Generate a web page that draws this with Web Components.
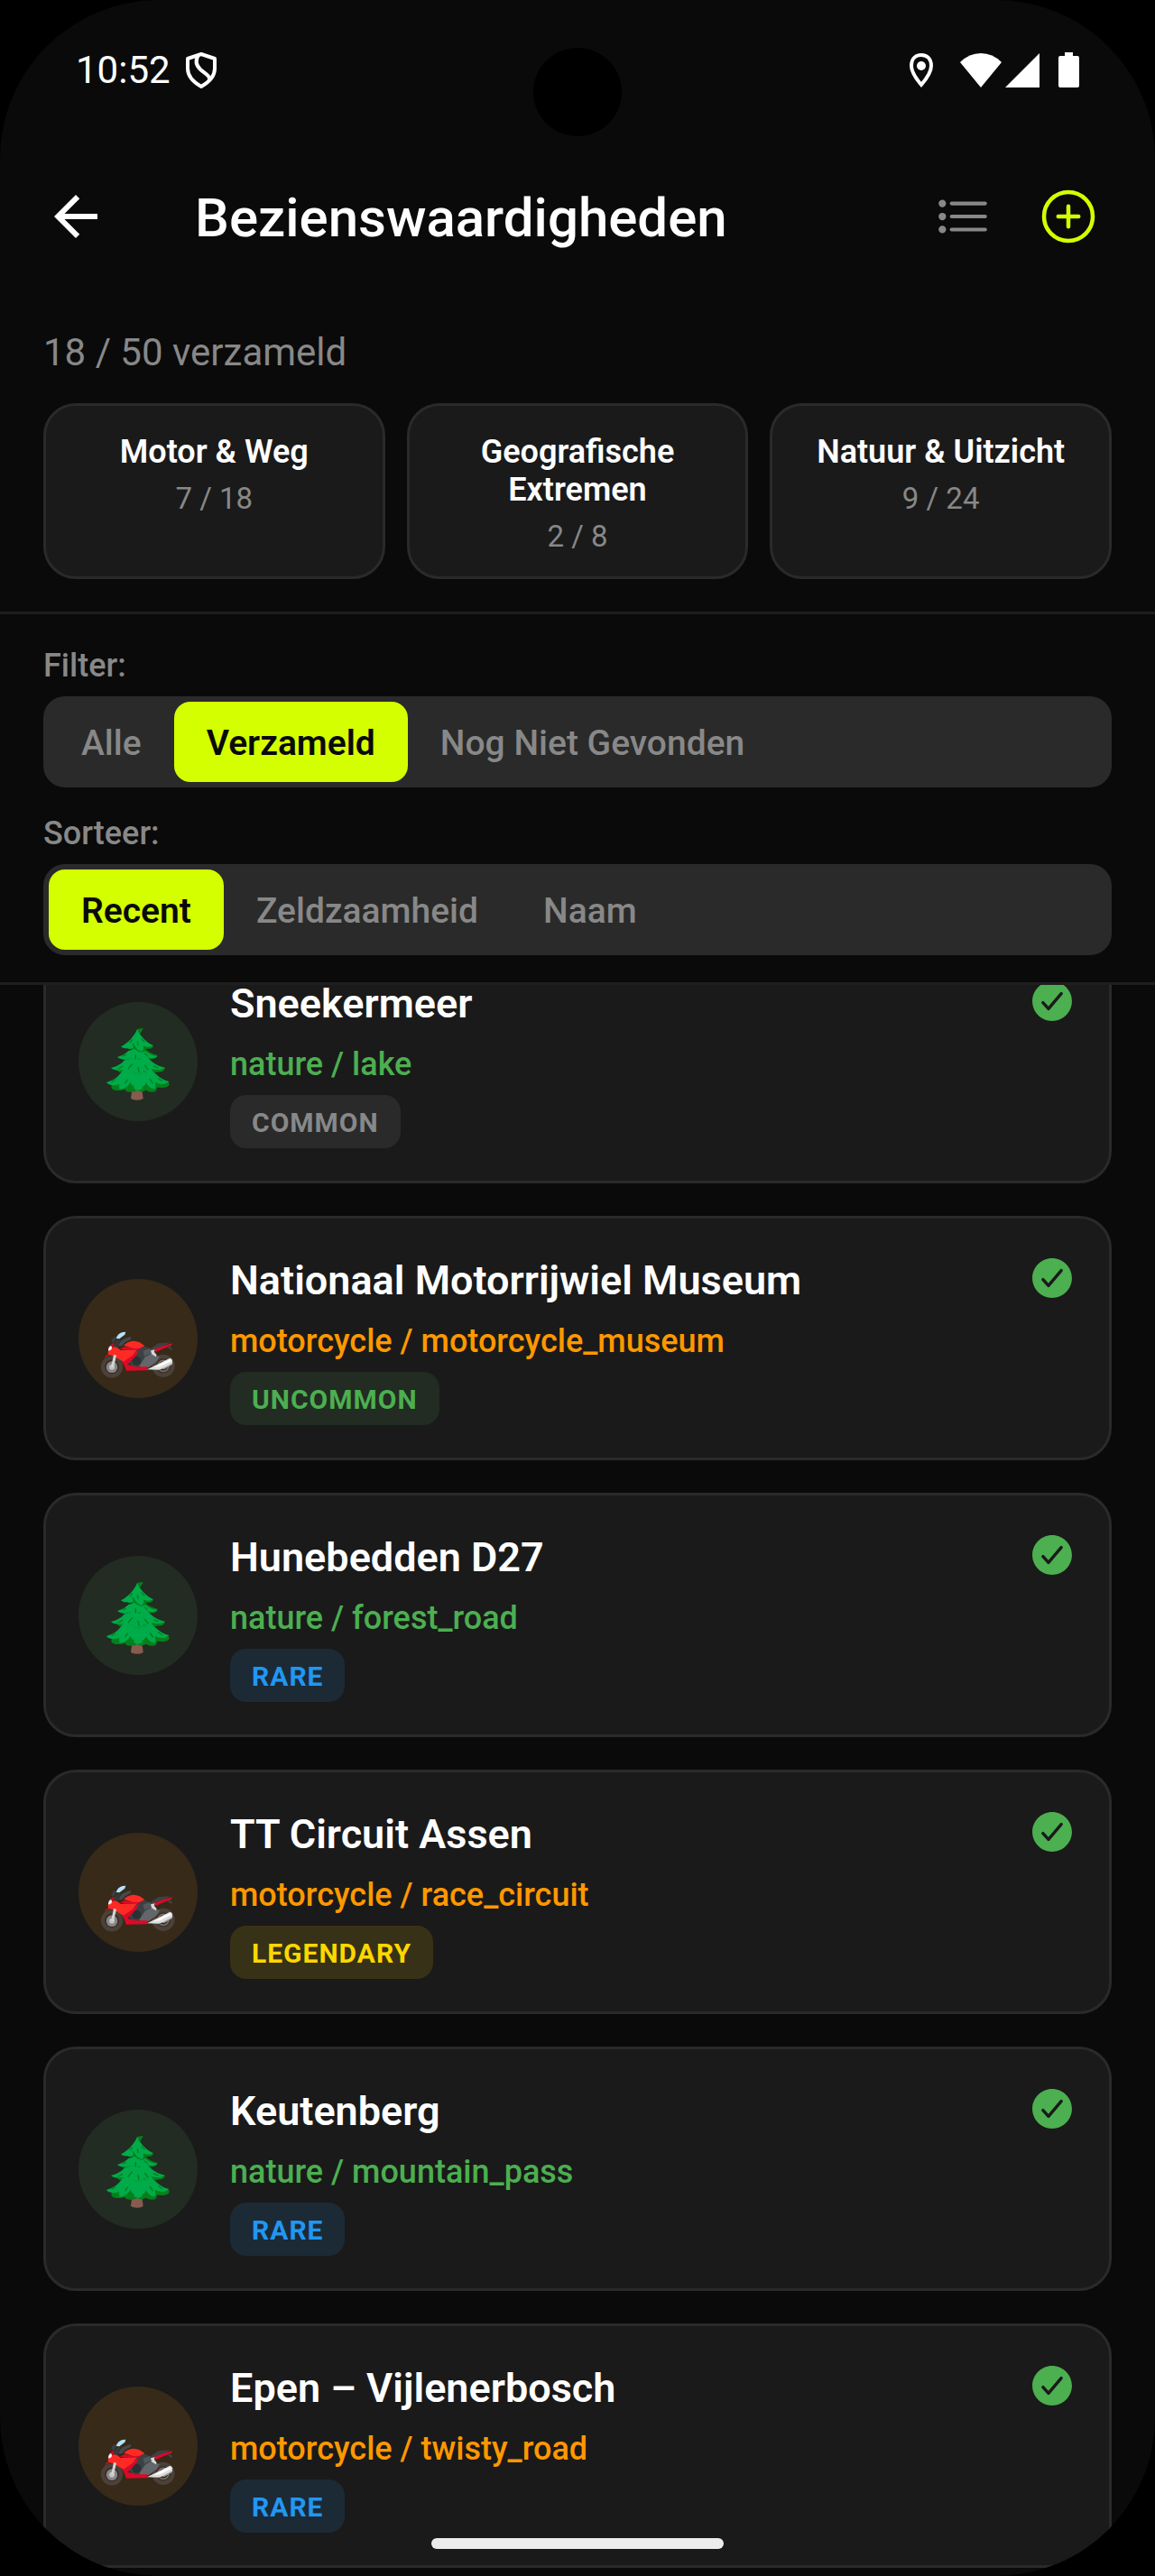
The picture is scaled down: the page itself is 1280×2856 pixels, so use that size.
<!DOCTYPE html>
<html lang="nl">
<head>
<meta charset="UTF-8">
<meta name="viewport" content="width=device-width, initial-scale=1">
<title>Bezienswaardigheden</title>
<style>
    html, body {
        height: 100%;
    }
    body {
        margin: 0;
        background-color: #000;
        color: #fff;
        font-family: Roboto, "Noto Sans", sans-serif;
    }
</style>
</head>
<body>

<phone-screen>
    <status-bar slot="status" time="10:52"></status-bar>
    <app-header slot="header">Bezienswaardigheden</app-header>

    <collection-summary slot="header" total="18 / 50 verzameld">
        <category-card count="7 / 18">Motor &amp; Weg</category-card>
        <category-card count="2 / 8">Geografische Extremen</category-card>
        <category-card count="9 / 24">Natuur &amp; Uitzicht</category-card>
    </collection-summary>

    <filter-panel slot="header">
        <segment-control label="Filter:" options="Alle,Verzameld,Nog Niet Gevonden" selected="Verzameld"></segment-control>
        <segment-control label="Sorteer:" options="Recent,Zeldzaamheid,Naam" selected="Recent"></segment-control>
    </filter-panel>

    <poi-list>
        <poi-card kind="nature" sub="lake" rarity="common">Sneekermeer</poi-card>
        <poi-card kind="motorcycle" sub="motorcycle_museum" rarity="uncommon">Nationaal Motorrijwiel Museum</poi-card>
        <poi-card kind="nature" sub="forest_road" rarity="rare">Hunebedden D27</poi-card>
        <poi-card kind="motorcycle" sub="race_circuit" rarity="legendary">TT Circuit Assen</poi-card>
        <poi-card kind="nature" sub="mountain_pass" rarity="rare">Keutenberg</poi-card>
        <poi-card kind="motorcycle" sub="twisty_road" rarity="rare">Epen – Vijlenerbosch</poi-card>
    </poi-list>
</phone-screen>

<script>
const treeIcon = `
    <svg viewBox="0 0 396 396" aria-hidden="true">
        <path fill="#875b50" d="M179 286h31l5 33q-1 7-20 7t-21-7z"/>
        <path fill="#04801b" d="M195 90c9 20 28 44 53 55q2 7-9 10l-16 1c9 10 23 17 39 20q2 9-12 13l-15 1c12 14 31 24 52 28q2 9-13 14l-21 2c14 15 30 26 49 36q2 14-22 15l-20-1q2 17-18 15-12-1-17-6l-9 4-12 1-9-4q-9 7-20 5-19 1-20-9-18 6-33 3-13-3-13-12l2-8c24-9 44-23 56-38-20 5-35 0-39-10l1-6c20-5 36-14 46-27-15 4-29-2-29-9l2-6c17-4 28-10 37-22-12 4-24 1-24-6l1-6c24-12 42-31 53-57z"/>
        <path fill="#00ab49" d="M195 90c9 20 28 44 53 54-9 6-24 7-34 1 4 8 3 14-3 19-11-1-19-8-24-19-6 9-16 14-22 9-7 1-17 1-24-6 24-12 43-32 54-58z"/>
        <path fill="#00ab49" d="M166 162c9-2 15-4 20-9 7 9 15 14 26 14l10-4c9 9 22 15 40 17-9 7-21 8-33 4-4 11-17 12-27 3-7 10-22 11-30-1-12 8-31 6-43-3 17-5 29-12 37-21z"/>
        <path fill="#00ab49" d="M153 193c10-1 18-3 23-9 13 9 24 11 38 1l15-2c14 17 32 30 58 35-13 9-31 8-44 4l9 18c-12 2-25-2-34-13-9 15-27 18-37 3-10 11-30 15-42 9l9-14c-16 4-31 2-40-6 21-5 37-15 45-26z"/>
        <path fill="#00ab49" d="M140 237c17 3 28-1 38-9 13 16 24 17 38 3 16 7 25 7 34 3 13 14 30 25 52 31-15 10-33 10-47 1l1 21c-14 4-26-8-32-20-2 10-7 14-12 13 2 10-5 13-14 13-10 0-15-5-14-14-7-2-9-7-11-13-9 14-20 23-37 24l-1-18c-14 7-31 6-43-5 21-5 37-17 48-30z"/>
        <g fill="none" stroke="#04801b" stroke-width="4" stroke-linecap="round">
            <path d="M178 126l-6 8M196 131l2 12M210 123l9 9M181 139l6 17M157 175l-10 4M190 176v12M220 171l8 7M146 214l-14 8M178 207l-13 15M198 217l3 16M221 211l10 14M250 213l14 5M122 257l-11 8M163 258l-8 12M238 257l9 13M266 254l11 8"/>
        </g>
    </svg>`;

const motorIcon = `
    <svg viewBox="-39 -141 396 396" aria-hidden="true">
        <circle cx="72" cy="151" r="30" fill="#37291a" stroke="#4b413b" stroke-width="13"/>
        <circle cx="243" cy="148" r="31" fill="#37291a" stroke="#4b413b" stroke-width="14"/>
        <circle cx="243" cy="148" r="18" fill="none" stroke="#77716c" stroke-width="5"/>
        <circle cx="72" cy="152" r="19" fill="#868686"/>
        <circle cx="72" cy="152" r="9" fill="#c4c4c4"/>
        <path fill="#3c4145" d="M138 100l38-18 24 9 26-18 40-3-28 16-28 15 8 12-26 34-50 6-24-28z"/>
        <circle cx="154" cy="131" r="15" fill="#2b3033"/>
        <path fill="#53585c" d="M176 98l22-8 6 14-24 12z"/>
        <path fill="#63676b" d="M164 147l18-28 24-14 9 8 16 4-10 16-26 20-28 2z"/>
        <path fill="#dc0928" d="M48 122q4-12 17-13l22 2 58-6 17-10q-6 18-24 34l-14 14 26 8h40v12l-70 1q-7-20-15-32l-20-20q-18-6-37 10z"/>
        <path fill="#fd2b24" d="M59 101l8-16 14-5 20 16 55-3-16 21-30 20-30-18-20-6z"/>
        <path fill="#dc0928" d="M98 92l16-8 28 5 37-7-20 12-24 2z"/>
        <path fill="#fd2b24" d="M112 80q8-10 26-14 12-2 26 4l17 11-17 8-22 1z"/>
        <path fill="#c40a22" d="M62 83l13-11 9 4-7 12z"/>
        <path fill="#eef6fa" d="M60 96q0-12 9-15 5 5 2 12l-9 5z"/>
        <path fill="#34393d" d="M77 83q4-22 25-24l-6 12-3 14q-8 3-16-2z"/>
        <path fill="#454a4e" d="M94 82q5-20 22-25l17-6q5 4 1 9l-18 9-11 13z"/>
        <path fill="#3a3f43" d="M69 66l8-14 7-1 1 11-8 9z"/>
        <path fill="#aee4ff" d="M86 57q5-16 21-21l11-1-3 9-18 14z"/>
        <path fill="#dc0928" d="M212 93l32-12 30-9-5 8-26 11-25 11z"/>
        <path fill="#3c4145" d="M255 87l12-5 6 10-3 4z"/>
        <path fill="#d6d6d6" d="M201 97l13-3-1 8 8 10-3 6-14-9z"/>
        <path fill="#d4d4d4" d="M78 111l9 2-9 40-9-1z"/>
        <path fill="#dedede" d="M189 160l34-17 42-21q8 2 8 8v10l-30 17-18 4z"/>
        <path fill="#fff" d="M210 152l56-26 3 6-38 19z"/>
        <path fill="#a3a3a3" d="M240 157l32-17v4l-26 15z"/>
    </svg>`;

class PhoneScreen extends HTMLElement {

    constructor() {
        super();
        this.attachShadow({ mode: "open" });
        this.render();
    }

    render() {
        this.shadowRoot.innerHTML = `
            <style>
                :host {
                    position: relative;
                    display: flex;
                    flex-direction: column;
                    height: 100vh;
                    overflow: hidden;
                    border-radius: 176px;
                    background-color: #0a0a0a;
                }
                #camera {
                    position: absolute;
                    top: 53px;
                    left: 50%;
                    width: 98px;
                    height: 98px;
                    margin-left: -49px;
                    border-radius: 50%;
                    background-color: #000;
                }
                #homeBar {
                    position: absolute;
                    bottom: 30px;
                    left: 50%;
                    width: 324px;
                    height: 12px;
                    margin-left: -162px;
                    border-radius: 6px;
                    background-color: #ececec;
                }
            </style>

            <slot name="status"></slot>
            <slot name="header"></slot>
            <slot></slot>
            <div id="camera"></div>
            <div id="homeBar"></div>
        `
    }
}

class StatusBar extends HTMLElement {

    constructor() {
        super();
        this.attachShadow({ mode: "open" });
        this.render();
    }

    render() {
        this.shadowRoot.innerHTML = `
            <style>
                :host {
                    display: flex;
                    flex: none;
                    align-items: center;
                    justify-content: space-between;
                    height: 156px;
                    padding: 0 84px;
                    font-size: 42px;
                    line-height: 48px;
                }
                div {
                    display: flex;
                    align-items: center;
                }
                svg {
                    display: block;
                    height: 40px;
                }
                #left {
                    gap: 16px;
                }
                #pin {
                    margin-right: 29px;
                }
                #signal {
                    margin: 0 21px 0 4px;
                }
            </style>

            <div id="left">
                <time>${this.getAttribute("time")}</time>
                <svg width="36" viewBox="0 0 36 40" fill="none" stroke="#fff" stroke-width="4" stroke-linejoin="round">
                    <path d="M18 2L33 7V18C33 27 25 34 18 38C11 34 3 27 3 18V7Z"/>
                    <path d="M15 3C11 9 12 14 17 19C23 24 28 26 27 31"/>
                </svg>
            </div>
            <div>
                <svg id="pin" width="28" viewBox="0 0 28 40">
                    <path fill="none" stroke="#fff" stroke-width="4" d="M14 3C7 3 3 8 3 15C3 22 8 29 14 36C20 29 25 22 25 15C25 8 21 3 14 3Z"/>
                    <circle cx="14" cy="15" r="5" fill="#fff"/>
                </svg>
                <svg width="46" viewBox="0 0 46 40" fill="#fff">
                    <path d="M0 11Q10 1 23 1T46 11L23 39Z"/>
                </svg>
                <svg id="signal" width="38" viewBox="0 0 38 40" fill="#fff">
                    <path d="M38 1V39H0Z"/>
                </svg>
                <svg width="23" viewBox="0 0 23 40" fill="#fff">
                    <path d="M7 0h9v4h5q2 0 2 2v31q0 2-2 2H2q-2 0-2-2V6q0-2 2-2h5z"/>
                </svg>
            </div>
        `
    }
}

class AppHeader extends HTMLElement {

    constructor() {
        super();
        this.attachShadow({ mode: "open" });
        this.render();
    }

    render() {
        this.shadowRoot.innerHTML = `
            <style>
                :host {
                    display: flex;
                    flex: none;
                    align-items: center;
                    height: 168px;
                    padding: 0 60px 0 48px;
                }
                h1 {
                    flex: 1;
                    margin: 0 0 0 96px;
                    padding-top: 4px;
                    font-size: 60px;
                    line-height: 72px;
                    font-weight: 500;
                }
                button {
                    padding: 0;
                    border: none;
                    background: none;
                }
                svg {
                    display: block;
                }
                #add {
                    margin-left: 48px;
                }
            </style>

            <button id="back" aria-label="Terug">
                <svg width="72" height="72" viewBox="0 0 24 24" fill="#fff">
                    <path d="M20 11H7.83l5.59-5.59L12 4l-8 8 8 8 1.41-1.41L7.83 13H20v-2z"/>
                </svg>
            </button>
            <h1><slot></slot></h1>
            <button id="list" aria-label="Lijst">
                <svg width="66" height="66" viewBox="0 0 512 512" fill="#888" stroke="#888" stroke-width="32" stroke-linecap="round">
                    <path d="M160 144h288M160 256h288M160 368h288"/>
                    <circle cx="80" cy="144" r="16"/>
                    <circle cx="80" cy="256" r="16"/>
                    <circle cx="80" cy="368" r="16"/>
                </svg>
            </button>
            <button id="add" aria-label="Toevoegen">
                <svg width="72" height="72" viewBox="0 0 512 512" fill="none" stroke="#d4ff00" stroke-width="32" stroke-linecap="round">
                    <circle cx="256" cy="256" r="192"/>
                    <path d="M256 176v160M336 256H176"/>
                </svg>
            </button>
        `
    }
}

class CollectionSummary extends HTMLElement {

    constructor() {
        super();
        this.attachShadow({ mode: "open" });
        this.render();
    }

    render() {
        this.shadowRoot.innerHTML = `
            <style>
                :host {
                    display: block;
                    flex: none;
                    padding: 42px 48px 36px;
                    border-bottom: 3px solid #1e1e1e;
                }
                p {
                    margin: 0 0 32px;
                    color: #888;
                    font-size: 42px;
                    line-height: 49px;
                }
                #cards {
                    display: grid;
                    grid-template-columns: repeat(3, 1fr);
                    gap: 24px;
                }
            </style>

            <p>${this.getAttribute("total")}</p>
            <div id="cards"><slot></slot></div>
        `
    }
}

class CategoryCard extends HTMLElement {

    constructor() {
        super();
        this.attachShadow({ mode: "open" });
        this.render();
    }

    render() {
        this.shadowRoot.innerHTML = `
            <style>
                :host {
                    display: block;
                    padding: 30px 36px 25px;
                    border: 3px solid #2a2a2a;
                    border-radius: 36px;
                    background-color: #1a1a1a;
                    text-align: center;
                }
                h2 {
                    margin: 0 0 11px;
                    font-size: 36px;
                    line-height: 42px;
                    font-weight: 600;
                }
                p {
                    margin: 0;
                    color: #888;
                    font-size: 33px;
                    line-height: 39px;
                }
            </style>

            <h2><slot></slot></h2>
            <p>${this.getAttribute("count")}</p>
        `
    }
}

class FilterPanel extends HTMLElement {

    constructor() {
        super();
        this.attachShadow({ mode: "open" });
        this.render();
    }

    render() {
        this.shadowRoot.innerHTML = `
            <style>
                :host {
                    display: flex;
                    flex: none;
                    flex-direction: column;
                    gap: 30px;
                    padding: 36px 48px 30px;
                    border-bottom: 3px solid #1e1e1e;
                }
            </style>

            <slot></slot>
        `
    }
}

class SegmentControl extends HTMLElement {

    constructor() {
        super();
        this.attachShadow({ mode: "open" });
        this.render();
        this.eventListeners();
    }

    eventListeners() {
        let buttons = this.shadowRoot.querySelectorAll("button");

        for (let button of buttons) {
            button.addEventListener("click", () => {
                buttons.forEach(b => b.setAttribute("aria-pressed", b == button));
            })
        }
    }

    render() {
        let selected = this.getAttribute("selected");
        let buttons = this.getAttribute("options").split(",").map(option =>
            `<button aria-pressed="${option == selected}">${option}</button>`
        ).join("");

        this.shadowRoot.innerHTML = `
            <style>
                :host {
                    display: block;
                }
                #label {
                    margin-bottom: 12px;
                    color: #888;
                    font-size: 36px;
                    line-height: 43px;
                    font-weight: 500;
                }
                #track {
                    display: flex;
                    padding: 6px;
                    border-radius: 24px;
                    background-color: #2a2a2a;
                }
                button {
                    padding: 23px 36px 19px;
                    border: none;
                    border-radius: 18px;
                    background: none;
                    color: #888;
                    font-family: inherit;
                    font-size: 39px;
                    line-height: 47px;
                    font-weight: 500;
                }
                button[aria-pressed="true"] {
                    background-color: #d4ff00;
                    color: #0a0a0a;
                    font-weight: 600;
                }
            </style>

            <div id="label">${this.getAttribute("label")}</div>
            <div id="track" role="group" aria-labelledby="label">${buttons}</div>
        `
    }
}

class PoiList extends HTMLElement {

    constructor() {
        super();
        this.attachShadow({ mode: "open" });
        this.render();
    }

    connectedCallback() {
        // first card starts half under the filter panel
        this.scrollTop = 87;
    }

    render() {
        this.shadowRoot.innerHTML = `
            <style>
                :host {
                    display: flex;
                    flex: 1;
                    flex-direction: column;
                    gap: 36px;
                    min-height: 0;
                    padding: 36px 48px;
                    overflow-y: auto;
                    scrollbar-width: none;
                }
            </style>

            <slot></slot>
        `
    }
}

class PoiCard extends HTMLElement {

    constructor() {
        super();
        this.attachShadow({ mode: "open" });
        this.render();
    }

    render() {
        let kind = this.getAttribute("kind");
        let rarity = this.getAttribute("rarity");

        this.shadowRoot.innerHTML = `
            <style>
                :host {
                    display: flex;
                    flex: none;
                    align-items: center;
                    gap: 36px;
                    padding: 36px;
                    border: 3px solid #2a2a2a;
                    border-radius: 36px;
                    background-color: #1a1a1a;
                }
                #icon {
                    flex: none;
                    width: 132px;
                    height: 132px;
                    border-radius: 50%;
                }
                #icon.nature {
                    background-color: #222c22;
                }
                #icon.motorcycle {
                    background-color: #372a18;
                }
                #text {
                    flex: 1;
                }
                h3 {
                    margin: 0 0 18px;
                    padding-top: 6px;
                    font-size: 45px;
                    line-height: 54px;
                    font-weight: 600;
                }
                p {
                    margin: 0 0 12px;
                    font-size: 36px;
                    line-height: 44px;
                    font-weight: 500;
                }
                p.nature {
                    color: #4caf50;
                }
                p.motorcycle {
                    color: #ff9800;
                }
                #badge {
                    width: fit-content;
                    padding: 13px 24px 11px;
                    border-radius: 18px;
                    font-size: 30px;
                    line-height: 35px;
                    font-weight: 700;
                    letter-spacing: 1px;
                    text-transform: uppercase;
                }
                .common {
                    background-color: #2a2a2a;
                    color: #888;
                }
                .uncommon {
                    background-color: #222c22;
                    color: #4caf50;
                }
                .rare {
                    background-color: #1c2a35;
                    color: #2196f3;
                }
                .legendary {
                    background-color: #373217;
                    color: #ffd700;
                }
                #check {
                    align-self: flex-start;
                    margin-top: 3px;
                }
            </style>

            <div id="icon" class="${kind}">${kind == "nature" ? treeIcon : motorIcon}</div>
            <div id="text">
                <h3><slot></slot></h3>
                <p class="${kind}">${kind} / ${this.getAttribute("sub")}</p>
                <div id="badge" class="${rarity}">${rarity}</div>
            </div>
            <svg id="check" width="54" height="54" viewBox="0 0 512 512" fill="#4caf50" role="img" aria-label="Verzameld">
                <path d="M256 48C141.31 48 48 141.31 48 256s93.31 208 208 208 208-93.31 208-208S370.69 48 256 48zm108.25 138.29l-134.4 160a16 16 0 01-12 5.71h-.27a16 16 0 01-11.89-5.3l-57.6-64a16 16 0 1123.78-21.4l45.29 50.32 122.59-145.91a16 16 0 0124.5 20.58z"/>
            </svg>
        `
    }
}

customElements.define("phone-screen", PhoneScreen);
customElements.define("status-bar", StatusBar);
customElements.define("app-header", AppHeader);
customElements.define("collection-summary", CollectionSummary);
customElements.define("category-card", CategoryCard);
customElements.define("filter-panel", FilterPanel);
customElements.define("segment-control", SegmentControl);
customElements.define("poi-card", PoiCard);
customElements.define("poi-list", PoiList);
</script>
</body>
</html>
